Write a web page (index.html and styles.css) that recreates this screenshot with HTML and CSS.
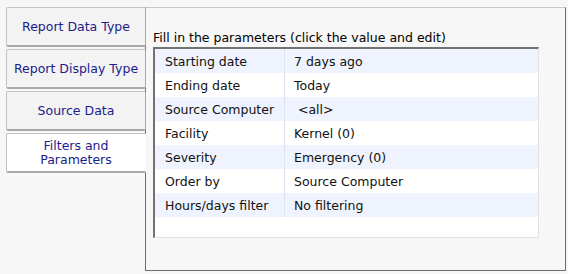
FILE: index.html
```html
<!DOCTYPE html>
<html>
  <head>
    <meta charset="UTF-8" />
    <title>Report Wizard</title>
    <link rel="stylesheet" href="styles.css">
  </head>
  <body>
    <div class="wizard">
      <div class="tabs">
        <div class="tab">Report Data Type</div>
        <div class="tab">Report Display Type</div>
        <div class="tab">Source Data</div>
        <div class="tab active">Filters and<br>Parameters</div>
      </div>
      <div class="panel">
        <div class="hint">Fill in the parameters (click the value and edit)</div>
        <div class="grid">
          <div class="row">
            <span class="key">Starting date</span>
            <span class="val">7 days ago</span>
          </div>
          <div class="row">
            <span class="key">Ending date</span>
            <span class="val">Today</span>
          </div>
          <div class="row">
            <span class="key">Source Computer</span>
            <span class="val">&nbsp;&lt;all&gt;</span>
          </div>
          <div class="row">
            <span class="key">Facility</span>
            <span class="val">Kernel (0)</span>
          </div>
          <div class="row">
            <span class="key">Severity</span>
            <span class="val">Emergency (0)</span>
          </div>
          <div class="row">
            <span class="key">Order by</span>
            <span class="val">Source Computer</span>
          </div>
          <div class="row">
            <span class="key">Hours/days filter</span>
            <span class="val">No filtering</span>
          </div>
        </div>
      </div>
    </div>
  </body>
</html>
```

FILE: styles.css
```css
body {
  margin: 0;
  background-color: #f7f7f7;
  font-family: "DejaVu Sans", Verdana, sans-serif;
  font-size: 12.5px;
  color: #111;
}
.wizard {
  display: flex;
  padding: 7px 0 0 6px;
}
.tabs {
  display: flex;
  flex-direction: column;
  gap: 2px;
  width: 140px;
  margin-right: -1px;
  position: relative;
  z-index: 1;
}
.tab {
  height: 40px;
  box-sizing: border-box;
  display: flex;
  align-items: center;
  justify-content: center;
  text-align: center;
  line-height: 14px;
  color: #1c1c8a;
  background-color: #f3f3f3;
  border: 1px solid #c4c4c4;
  border-bottom: 2px solid #a9a9a9;
  border-right-color: #a9a9a9;
  border-radius: 2px;
}
.tab.active {
  background-color: #fff;
  border-right-color: #fff;
}
.panel {
  width: 421px;
  height: 264px;
  box-sizing: border-box;
  border: 1px solid #6e6e6e;
  border-top-color: #c8c8c8;
  padding: 0 26px 0 7px;
}
.hint {
  color: #000;
  margin-top: 22px;
  height: 17px;
}
.grid {
  height: 191px;
  box-sizing: border-box;
  background-color: #fff;
  border-style: solid;
  border-width: 2px 1px 1px 2px;
  border-color: #727272 #e2e2e2 #e2e2e2 #727272;
}
.row {
  display: flex;
  height: 24px;
  align-items: center;
}
.row:nth-child(odd) {
  background-color: #eef3fd;
}
.key {
  width: 130px;
  box-sizing: border-box;
  padding-left: 10px;
  align-self: stretch;
  display: flex;
  align-items: center;
  border-right: 1px solid #dde3ee;
}
.val {
  padding-left: 9px;
}
```
